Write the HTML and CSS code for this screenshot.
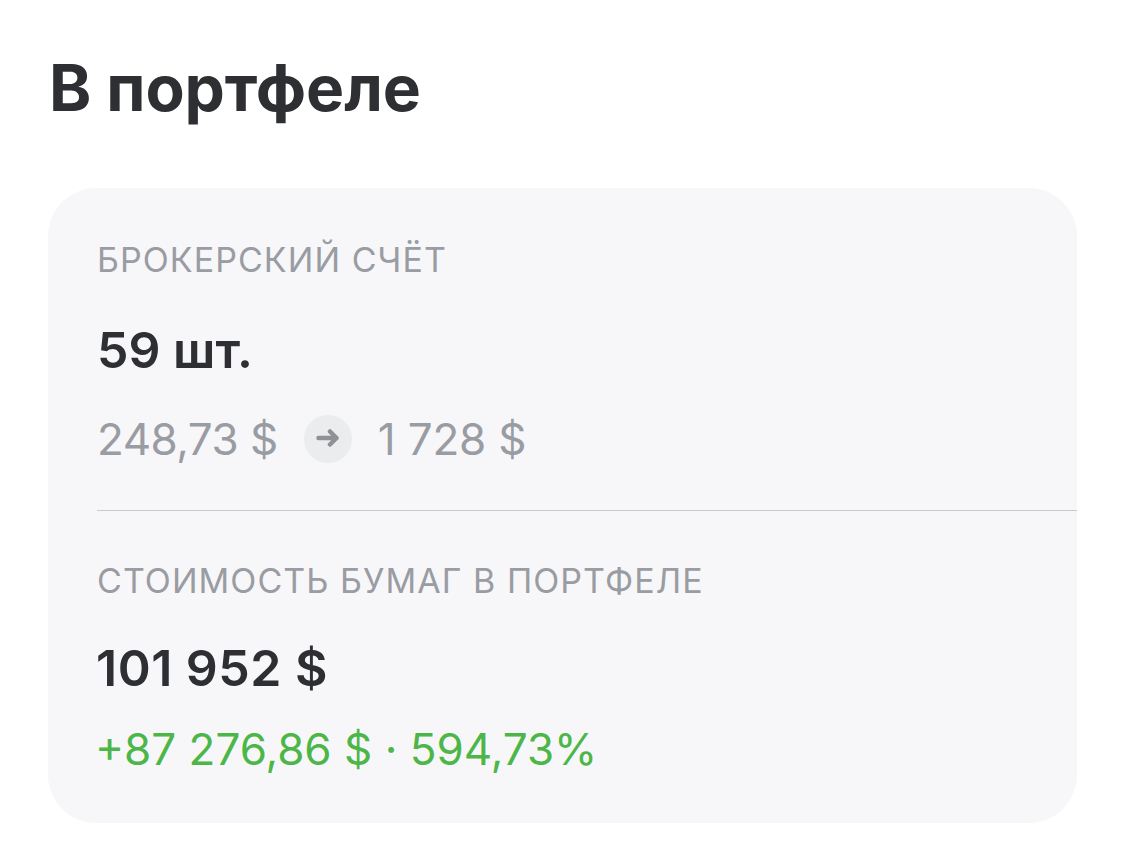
FILE: index.html
```html
<!DOCTYPE html>
<html lang="ru">
<head>
<meta charset="utf-8">
<title>В портфеле</title>
<link rel="stylesheet" href="styles.css">
</head>
<body>
<main class="page">
  <h1 class="title">В портфеле</h1>
  <section class="card">
    <div class="block block-top">
      <div class="label">БРОКЕРСКИЙ СЧЁТ</div>
      <div class="value value-count">59 шт.</div>
      <div class="prices">
        <span>248,73 $</span>
        <span class="arrow">
          <svg width="24" height="20" viewBox="0 0 24 20"><path d="M2.500 9h18M14 2.500 20.500 9 14 15.500" fill="none" stroke="#8f9197" stroke-width="4.500" stroke-linecap="round" stroke-linejoin="round"/></svg>
        </span>
        <span class="price-next">1 728 $</span>
      </div>
    </div>
    <div class="block block-bottom">
      <div class="label">СТОИМОСТЬ БУМАГ В ПОРТФЕЛЕ</div>
      <div class="value value-total">101 952 $</div>
      <div class="gain">+87 276,86 $ · 594,73%</div>
    </div>
  </section>
</main>
</body>
</html>
```
FILE: styles.css
```css
* { box-sizing: border-box; }
html, body { margin: 0; background: #fff; }
body { font-family: Inter, "Liberation Sans", sans-serif; width: 1125px; height: 855px; overflow: hidden; }
.page { padding: 51px 48px 0 48px; }
.title { margin: 0 0 63px 1px; font-size: 64px; line-height: 74px; font-weight: 700; color: #2d2f33; letter-spacing: -0.1px; }
.card { background: #f7f7f9; border-radius: 48px; height: 635px; padding-left: 49px; }
.block-top { padding-top: 52px; height: 323px; border-bottom: 1px solid #c9c9ce; }
.block-bottom { padding-top: 50px; }
.label { font-size: 34px; line-height: 40px; color: #9a9ca3; letter-spacing: 1.05px; }
.value { font-size: 50px; line-height: 56px; font-weight: 600; color: #2d2f33; }
.value-count { margin-top: 42px; }
.value-total { margin: 39px 0 0 -1px; letter-spacing: 0.5px; }
.prices { margin-top: 36px; display: flex; align-items: center; gap: 26px; font-size: 44px; line-height: 50px; letter-spacing: -0.5px; color: #9a9ca3; }
.price-next { letter-spacing: -0.2px; }
.arrow { width: 48px; height: 48px; border-radius: 50%; background: #ebecee; display: flex; align-items: center; justify-content: center; }
.gain { margin: 28px 0 0 -2px; font-size: 44px; line-height: 50px; color: #4cb648; }
```
